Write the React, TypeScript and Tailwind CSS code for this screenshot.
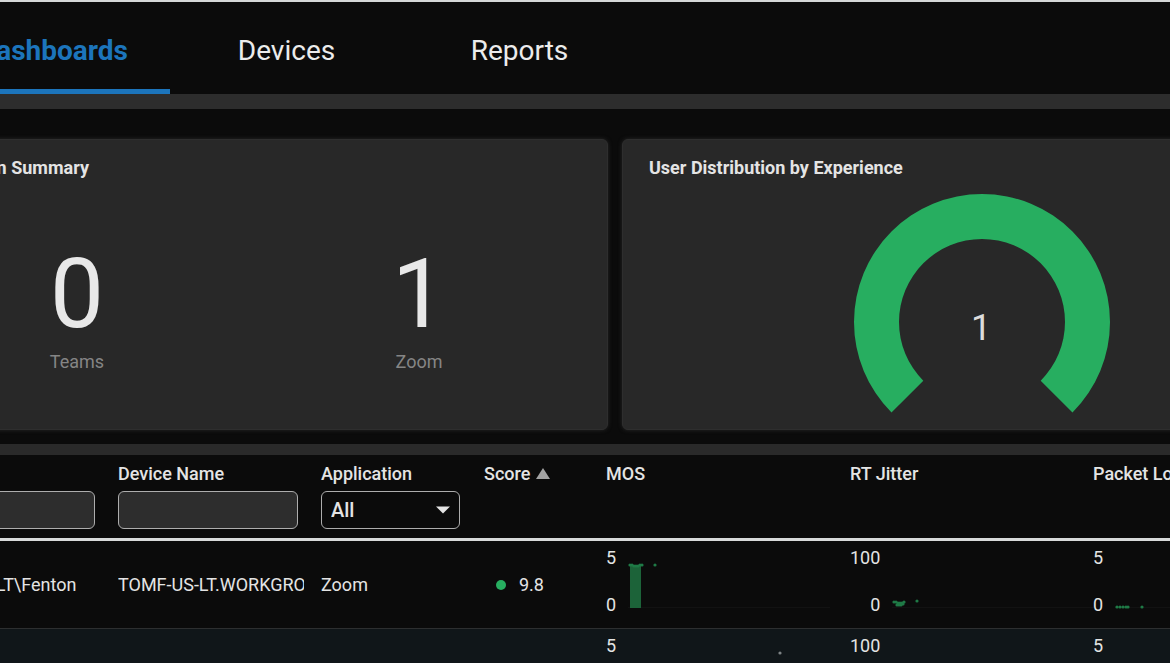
import React from "react";

type Point = { x: number; y: number };
type ChartData = {
  max: number;
  bar?: { x: number; y: number; width: number; height: number };
  points: Point[];
  color?: string;
};

const tabs = ["Dashboards", "Devices", "Reports"];

const mos: ChartData = {
  max: 5,
  bar: { x: 8, y: 16, width: 11, height: 42 },
  points: [
    { x: 8, y: 16 }, { x: 10, y: 16 }, { x: 12, y: 17 }, { x: 14, y: 17 },
    { x: 16, y: 17 }, { x: 18, y: 16 }, { x: 20, y: 16 }, { x: 33, y: 16 },
  ],
};

const jitter: ChartData = {
  max: 100,
  points: [
    { x: 8, y: 53 }, { x: 10, y: 53 }, { x: 11, y: 56 }, { x: 12, y: 54 },
    { x: 13, y: 56 }, { x: 14, y: 54 }, { x: 15, y: 56 }, { x: 16, y: 54 },
    { x: 17, y: 55 }, { x: 18, y: 53 }, { x: 31, y: 52 },
  ],
};

const loss: ChartData = {
  max: 5,
  points: [
    { x: 8, y: 58 }, { x: 11, y: 58 }, { x: 14, y: 58 }, { x: 17, y: 58 },
    { x: 19, y: 58 }, { x: 33, y: 58 },
  ],
};

const emptyMos: ChartData = { max: 5, points: [{ x: 158, y: 16 }], color: "#7d8385" };
const emptyJitter: ChartData = { max: 100, points: [] };
const emptyLoss: ChartData = { max: 5, points: [] };

function Spark({ data }: { data: ChartData }) {
  return (
    <div className="flex h-[87px] items-start gap-1.5 pt-[5px]">
      <div className="flex flex-col gap-[23px] text-right leading-6">
        <span>{data.max}</span>
        <span>0</span>
      </div>
      <svg className="h-[72px] w-[208px] shrink-0" viewBox="0 -3 208 72" aria-hidden="true">
        <path d="M6 58.500H208" stroke="#121212" />
        {data.bar && <rect {...data.bar} y={data.bar.y + 1} fill="#1c6339" />}
        {data.points.map((p, i) => (
          <circle key={i} cx={p.x} cy={p.y} r="1.6" fill={data.color ?? "#1f7a46"} />
        ))}
      </svg>
    </div>
  );
}

function Metric({ value, label }: { value: number; label: string }) {
  return (
    <div className="flex flex-1 flex-col items-center">
      <span className="text-8xl leading-[96px] text-[#e8e8e8]">{value}</span>
      <span className="mt-2 text-lg leading-6 text-[#858585]">{label}</span>
    </div>
  );
}

const card = "rounded-md border border-[#2e2e2e] bg-[#282828] shadow-[0_0_4px_#282828]";
const input = "h-[38px] w-full rounded-md border border-[#adadad]";

export default function App() {
  return (
    <div className="min-h-screen overflow-hidden bg-[#0b0b0b] font-['Roboto',sans-serif] text-lg text-[#e4e4e4]">
      <div className="-mr-[172px] -ml-28">
        <header className="border-t-2 border-[#d5d8d8]">
          <nav className="flex pl-12">
            {tabs.map((tab, i) => (
              <a
                key={tab}
                href={"#" + tab.toLowerCase()}
                aria-current={i === 0 ? "page" : undefined}
                className={
                  i === 0
                    ? "flex h-[92px] w-[234px] items-center justify-center border-b-[5px] border-[#1c75bc] pt-3.5 pb-1 text-[28px] font-bold text-[#1c75bc]"
                    : "flex h-[92px] w-[233px] items-center justify-center border-b-[5px] border-transparent pt-3.5 pb-1 text-[28px] text-[#ececec]"
                }
              >
                {tab}
              </a>
            ))}
          </nav>
          <div className="h-[15px] bg-[#2d2d2d]" />
        </header>

        <main className="pt-[30px]">
          <div className="grid grid-cols-2 gap-[14px]">
            <section className={card + " h-[291px] px-[17px] pt-4"}>
              <h2 className="pl-[9px] font-bold leading-6">Application Summary</h2>
              <div className="mt-[66px] flex">
                <Metric value={0} label="Teams" />
                <Metric value={1} label="Zoom" />
              </div>
            </section>
            <section className={card + " h-[291px] px-[17px] pt-4"}>
              <h2 className="pl-[9px] font-bold leading-6">User Distribution by Experience</h2>
              <svg className="mx-auto mt-3.5 h-[220px] w-64" viewBox="0 0 256 220" role="img" aria-label="1 user with good experience">
                <path
                  d="M37.490 218.510A128 128 0 1 1 218.510 218.510L186.690 186.690A83 83 0 1 0 69.310 186.690Z"
                  fill="#27ae60"
                />
                <text x="127" y="146" textAnchor="middle" fontSize="36" fill="#dcdcdc">1</text>
              </svg>
            </section>
          </div>

          <section className="mt-[14px] border-t-[11px] border-[#2a2a2a]">
            <table className="w-full table-fixed border-separate border-spacing-0 text-left">
              <colgroup>
                <col className="w-[219px]" />
                <col className="w-[203px]" />
                <col className="w-[163px]" />
                <col className="w-[122px]" />
                <col className="w-[244px]" />
                <col className="w-[243px]" />
                <col />
              </colgroup>
              <thead>
                <tr className="[&>th]:h-[86px] [&>th]:border-b-3 [&>th]:border-[#d8dada] [&>th]:pt-[7px] [&>th]:pl-[11px] [&>th]:align-top [&>th]:font-medium [&>th]:leading-6">
                  <th className="pr-3">
                    <label htmlFor="user">User Name</label>
                    <input id="user" type="text" className={input + " mt-[5px] block bg-[#2d2d2d] px-2.5"} />
                  </th>
                  <th className="pr-3">
                    <label htmlFor="device">Device Name</label>
                    <input id="device" type="text" className={input + " mt-[5px] block bg-[#2d2d2d] px-2.5"} />
                  </th>
                  <th className="pr-[13px]">
                    <label htmlFor="application">Application</label>
                    <div className="relative mt-[5px]">
                      <select id="application" className={input + " block appearance-none bg-[#0b0b0b] px-[9px] text-xl"}>
                        <option>All</option>
                        <option>Teams</option>
                        <option>Zoom</option>
                      </select>
                      <svg className="pointer-events-none absolute top-[15px] right-[10px] h-2 w-3.5" viewBox="0 0 14 8" aria-hidden="true">
                        <path d="M0 0.500H14L7 7.500Z" fill="#e4e4e4" />
                      </svg>
                    </div>
                  </th>
                  <th>
                    <button type="button" className="flex items-center gap-1.5">
                      Score
                      <svg className="h-3 w-3.5" viewBox="0 0 14 12" aria-hidden="true">
                        <path d="M7 0L14 11H0Z" fill="#a3a3a3" />
                      </svg>
                    </button>
                  </th>
                  <th>MOS</th>
                  <th>RT Jitter</th>
                  <th>Packet Loss</th>
                </tr>
              </thead>
              <tbody>
                <tr className="[&>td]:border-b [&>td]:border-[#2d2f30] [&>td]:p-0 [&>td]:pl-[11px]">
                  <td><div className="pl-4">TOMF-US-LT\Fenton</div></td>
                  <td><div className="mr-1.5 overflow-hidden whitespace-nowrap">TOMF-US-LT.WORKGROUP</div></td>
                  <td>Zoom</td>
                  <td>
                    <div className="flex items-center gap-[13px] pl-3">
                      <span className="size-2.5 rounded-full bg-[#27ae60]" />
                      9.8
                    </div>
                  </td>
                  <td><Spark data={mos} /></td>
                  <td><Spark data={jitter} /></td>
                  <td><Spark data={loss} /></td>
                </tr>
                <tr className="bg-[#101619] [&>td]:p-0 [&>td]:pl-[11px]">
                  <td />
                  <td />
                  <td />
                  <td />
                  <td><Spark data={emptyMos} /></td>
                  <td><Spark data={emptyJitter} /></td>
                  <td><Spark data={emptyLoss} /></td>
                </tr>
              </tbody>
            </table>
          </section>
        </main>
      </div>
    </div>
  );
}
